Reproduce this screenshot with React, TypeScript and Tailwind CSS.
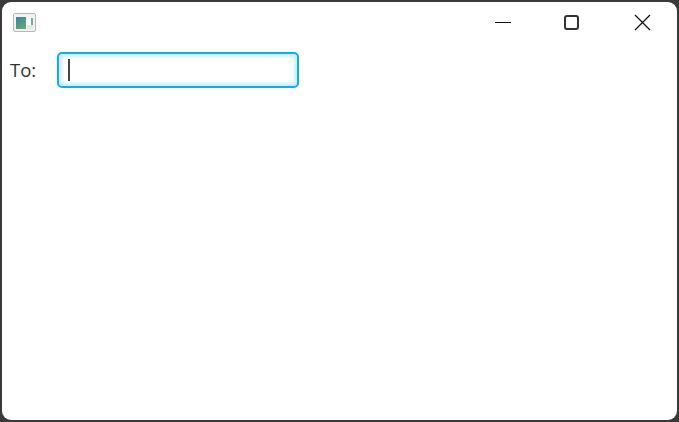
function AppIcon() {
  return (
    <svg width="24" height="20" viewBox="0 0 24 20" className="block">
      <defs>
        <linearGradient id="pane" x1="0" y1="0" x2="0.6" y2="1">
          <stop offset="0" stopColor="#3f7fa6" />
          <stop offset="1" stopColor="#5fa878" />
        </linearGradient>
      </defs>
      <rect x="0.5" y="0.5" width="22" height="18" rx="1.5" fill="#f2f2f2" stroke="#b4b8bd" />
      <rect x="3" y="4" width="10" height="12" fill="url(#pane)" />
      <rect x="14" y="4" width="6" height="8" fill="#fbfbfb" />
      <rect x="18" y="5" width="2" height="7" fill="#6fae9a" />
      <rect x="14" y="12" width="6" height="4" fill="#e4e6e4" />
    </svg>
  );
}

function TitleBar() {
  return (
    <div className="flex h-[41px] items-center pl-[11px]">
      <AppIcon />
      <div className="ml-auto flex items-center">
        <button className="flex h-[41px] w-[69px] items-center justify-center">
          <span className="block h-[1px] w-[16px] bg-[#111]" />
        </button>
        <button className="flex h-[41px] w-[70px] items-center justify-center pr-[2px]">
          <span className="block size-[15px] rounded-[3px] border-2 border-[#333]" />
        </button>
        <button className="flex h-[41px] w-[70px] items-center justify-center">
          <svg width="17" height="17" viewBox="0 0 17 17" fill="none" stroke="#111" strokeWidth="1.3">
            <path d="M1 1 L16 16 M16 1 L1 16" />
          </svg>
        </button>
      </div>
    </div>
  );
}

export default function App() {
  return (
    <div className="h-[422px] w-[679px] overflow-hidden bg-[#3a3a3a] font-['Open_Sans',sans-serif]">
      <div className="mt-[2px] ml-[2px] h-[418px] w-[675px] rounded-[9px] bg-white">
        <TitleBar />
        <div className="flex items-center pl-[8px] pt-[9px]">
          <label className="w-[47px] text-[18.5px] leading-[36px] text-[#333]">To:</label>
          <div className="flex h-[36px] w-[242px] items-center rounded-[5px] border-2 border-[#12aee2] bg-white pl-[9px] shadow-[inset_0_0_3px_3px_#cdeef9]">
            <span className="block h-[22px] w-[1.5px] bg-[#444]" />
          </div>
        </div>
      </div>
    </div>
  );
}
